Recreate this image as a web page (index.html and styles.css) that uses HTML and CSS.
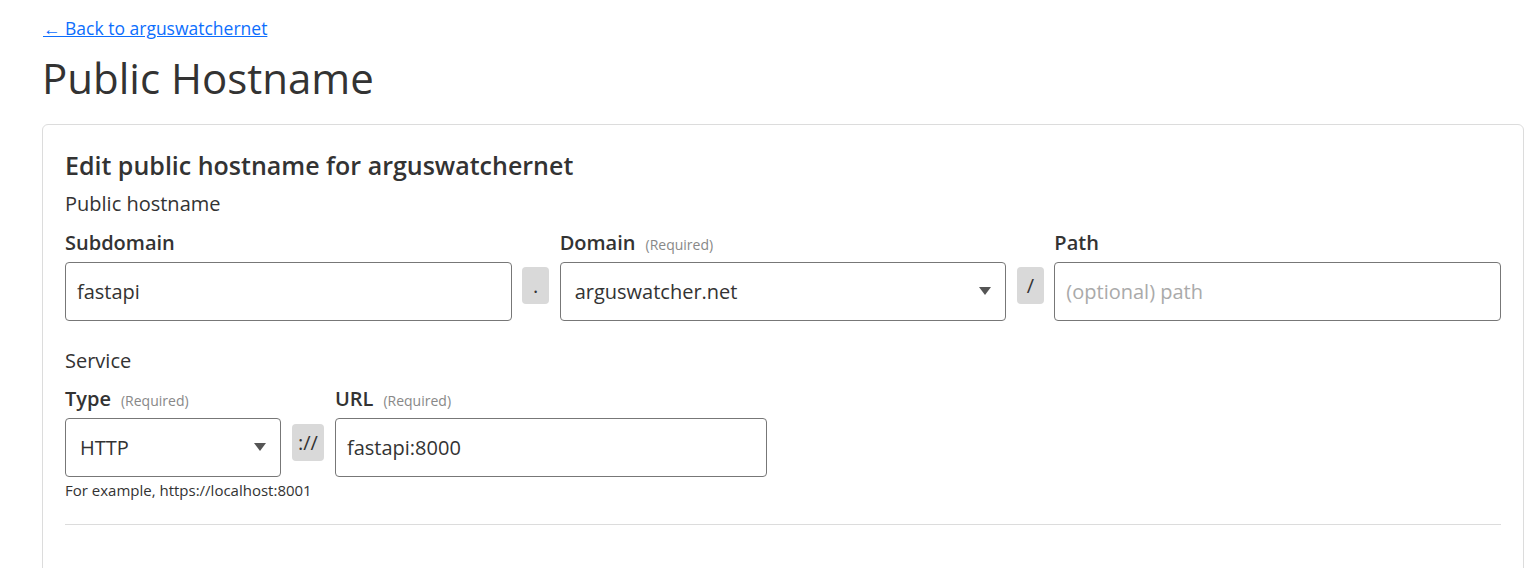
FILE: index.html
```html
<!DOCTYPE html>
<html lang="en">
<head>
<meta charset="utf-8">
<title>Public Hostname</title>
<link rel="stylesheet" href="styles.css">
</head>
<body>
<main class="page">
  <a class="back" href="#">← Back to arguswatchernet</a>
  <h1 class="title">Public Hostname</h1>
  <section class="card">
    <h2 class="card-title">Edit public hostname for arguswatchernet</h2>
    <div class="group-label">Public hostname</div>
    <div class="host-row">
      <div class="field">
        <label class="label">Subdomain</label>
        <input class="control" type="text" value="fastapi">
      </div>
      <div class="sep">.</div>
      <div class="field">
        <label class="label">Domain <span class="req">(Required)</span></label>
        <div class="select-wrap">
          <select class="control select"><option>arguswatcher.net</option></select>
          <svg class="caret" width="12" height="8" viewBox="0 0 12 8"><path d="M0 0h12L6 8z" fill="#555"/></svg>
        </div>
      </div>
      <div class="sep">/</div>
      <div class="field">
        <label class="label">Path</label>
        <input class="control" type="text" placeholder="(optional) path">
      </div>
    </div>

    <div class="group-label service">Service</div>
    <div class="svc-row">
      <div class="field type-field">
        <label class="label">Type <span class="req">(Required)</span></label>
        <div class="select-wrap">
          <select class="control select type"><option>HTTP</option></select>
          <svg class="caret" width="12" height="8" viewBox="0 0 12 8"><path d="M0 0h12L6 8z" fill="#555"/></svg>
        </div>
        <div class="hint">For example, https://localhost:8001</div>
      </div>
      <div class="sep">://</div>
      <div class="field url-field">
        <label class="label">URL <span class="req">(Required)</span></label>
        <input class="control" type="text" value="fastapi:8000">
      </div>
    </div>
    <hr class="rule">
  </section>
</main>
</body>
</html>
```

FILE: styles.css
```css
html, body {
  margin: 0;
  padding: 0;
  background: #fff;
}
body {
  font-family: "Open Sans", "Noto Sans", sans-serif;
  color: #333;
}
.page {
  padding: 15px 15px 0 42px;
}
.back {
  display: inline-block;
  font-size: 17.5px;
  line-height: 26px;
  color: #0d6efd;
  text-decoration: underline;
  margin-left: 1px;
}
.title {
  font-size: 42px;
  font-weight: 500;
  line-height: 50px;
  margin: 12px 0 0 0;
  color: #333;
}
.card {
  margin-top: 21px;
  border: 1px solid #dcdcdc;
  border-radius: 6px;
  padding: 24px 22px 60px 22px;
  height: 500px;
}
.card-title {
  font-size: 25px;
  font-weight: 600;
  line-height: 32px;
  margin: 0;
}
.group-label {
  font-size: 20px;
  line-height: 28px;
  margin-top: 9px;
}
.group-label.service {
  margin-top: 26px;
}
.host-row {
  display: grid;
  grid-template-columns: 1fr auto 1fr auto 1fr;
  column-gap: 10.5px;
  margin-top: 11px;
}
.svc-row {
  display: grid;
  grid-template-columns: 216px auto 432px;
  justify-content: start;
  column-gap: 11px;
  margin-top: 10px;
}
.field {
  display: flex;
  flex-direction: column;
  min-width: 0;
}
.label {
  font-size: 20px;
  font-weight: 600;
  line-height: 28px;
  height: 28px;
  margin-bottom: 5px;
  display: flex;
  align-items: baseline;
}
.req {
  font-size: 14px;
  font-weight: 400;
  line-height: 18px;
  color: #888;
  margin-left: 10px;
}
.control {
  display: block;
  box-sizing: border-box;
  width: 100%;
  height: 59px;
  margin: 0;
  border: 1px solid #777;
  border-radius: 4px;
  padding: 0 11px;
  font-family: inherit;
  font-size: 20px;
  color: #333;
  background: #fff;
  outline: none;
}
.control::placeholder {
  color: #aaa;
}
.select-wrap {
  position: relative;
}
.select {
  appearance: none;
  -webkit-appearance: none;
  padding-left: 14px;
}
.caret {
  position: absolute;
  right: 15px;
  top: 25px;
  pointer-events: none;
}
.sep {
  box-sizing: border-box;
  align-self: start;
  margin-top: 38px;
  min-width: 27px;
  height: 37px;
  line-height: 37px;
  padding: 0 7px;
  background: #d9d9d9;
  border-radius: 4px;
  font-size: 20px;
  color: #333;
  text-align: center;
}
.svc-row .sep {
  margin-top: 39px;
  padding: 0 6px;
}
.hint {
  font-size: 15px;
  line-height: 20px;
  margin-top: 3px;
  white-space: nowrap;
}
.rule {
  border: 0;
  border-top: 1px solid #dcdcdc;
  margin: 24px 0 0 0;
}
```
